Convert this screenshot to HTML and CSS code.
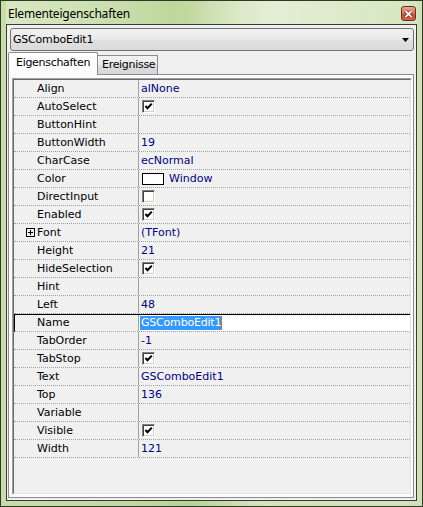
FILE: index.html
```html
<!DOCTYPE html>
<html>
<head>
    <title>Elementeigenschaften</title>
    <link rel="stylesheet" href="styles.css">
</head>
<body>
    <div class="window">
        <div class="titlebar">
            <span class="title">Elementeigenschaften</span>
            <span class="close">
                <svg width="9" height="8" viewBox="0 0 9 8">
                    <path d="M1.5 1 L7.5 7 M7.5 1 L1.5 7" stroke="#5a1a10" stroke-width="3.2"/>
                    <path d="M1.5 1 L7.5 7 M7.5 1 L1.5 7" stroke="#fff" stroke-width="1.8"/>
                </svg>
            </span>
        </div>
        <div class="client">
            <div class="combo">
                <span class="combo-text">GSComboEdit1</span>
                <svg width="7" height="4" viewBox="0 0 7 4"><path d="M0 0 H7 L3.5 4 Z" fill="#000"/></svg>
            </div>
            <div class="tabs">
                <div class="tab active">Eigenschaften</div>
                <div class="tab">Ereignisse</div>
            </div>
            <div class="panel">
                <div class="grid">
                    <div class="rows">
                        <div class="row"><div class="name">Align</div><div class="value">alNone</div></div>
                        <div class="row"><div class="name">AutoSelect</div><div class="value"><span class="check on"></span></div></div>
                        <div class="row"><div class="name">ButtonHint</div><div class="value"></div></div>
                        <div class="row"><div class="name">ButtonWidth</div><div class="value">19</div></div>
                        <div class="row"><div class="name">CharCase</div><div class="value">ecNormal</div></div>
                        <div class="row"><div class="name">Color</div><div class="value"><span class="swatch"></span>Window</div></div>
                        <div class="row"><div class="name">DirectInput</div><div class="value"><span class="check"></span></div></div>
                        <div class="row"><div class="name">Enabled</div><div class="value"><span class="check on"></span></div></div>
                        <div class="row"><div class="name tree"><span class="plus"></span>Font</div><div class="value">(TFont)</div></div>
                        <div class="row"><div class="name">Height</div><div class="value">21</div></div>
                        <div class="row"><div class="name">HideSelection</div><div class="value"><span class="check on"></span></div></div>
                        <div class="row"><div class="name">Hint</div><div class="value"></div></div>
                        <div class="row"><div class="name">Left</div><div class="value">48</div></div>
                        <div class="row sel"><div class="name">Name</div><div class="value"><span class="selected">GSComboEdit1</span></div></div>
                        <div class="row"><div class="name">TabOrder</div><div class="value">-1</div></div>
                        <div class="row"><div class="name">TabStop</div><div class="value"><span class="check on"></span></div></div>
                        <div class="row"><div class="name">Text</div><div class="value">GSComboEdit1</div></div>
                        <div class="row"><div class="name">Top</div><div class="value">136</div></div>
                        <div class="row"><div class="name">Variable</div><div class="value"></div></div>
                        <div class="row"><div class="name">Visible</div><div class="value"><span class="check on"></span></div></div>
                        <div class="row"><div class="name">Width</div><div class="value">121</div></div>
                    </div>
                </div>
            </div>
        </div>
    </div>
</body>
</html>
```

FILE: styles.css
```css
body {
    margin: 0;
    font-family: "DejaVu Sans", Verdana, sans-serif;
    font-size: 11px;
}

.window {
    box-sizing: border-box;
    width: 423px;
    height: 507px;
    display: flex;
    flex-direction: column;
    border: 1px solid #2f3a26;
    padding: 0 5px 5px 5px;
    background: linear-gradient(to right, #c8dda9 0%, #c0d89e 35%, #b8d292 45%, #d5e6bf 62%, #d0e3b8 100%);
}

.titlebar {
    box-sizing: border-box;
    height: 23px;
    padding: 2px 1px 0 2px;
    display: flex;
    align-items: center;
    justify-content: space-between;
    background: linear-gradient(to right, rgba(222, 236, 205, 0.7), rgba(200, 222, 170, 0.2) 40%, rgba(230, 241, 217, 0.8) 65%, rgba(216, 233, 196, 0.6));
}

.title {
    font-family: "Noto Sans", "Open Sans", sans-serif;
    font-size: 12px;
    color: #000;
    letter-spacing: -0.2px;
}

.close {
    box-sizing: border-box;
    width: 15px;
    height: 15px;
    display: flex;
    align-items: center;
    justify-content: center;
    border: 1px solid #6e2c22;
    border-radius: 3px;
    background: linear-gradient(#eaa696, #d9735c 50%, #c8452b 51%, #d7644a);
}

.client {
    flex: 1;
    display: flex;
    flex-direction: column;
    border: 1px solid #3a3a3a;
    background: #f0f0f0;
}

.combo {
    box-sizing: border-box;
    height: 23px;
    margin: 3px 2px 0 3px;
    padding: 0 4px 0 2px;
    display: flex;
    align-items: center;
    justify-content: space-between;
    border: 1px solid #707070;
    border-radius: 3px;
    background: linear-gradient(#f2f2f2, #e9e9e9 50%, #e0e0e0 51%, #dadada);
}

.combo-text {
    color: #000;
    letter-spacing: -0.2px;
}

.tabs {
    display: flex;
    align-items: flex-end;
    height: 22px;
    margin: 1px 0 0 1px;
}

.tab {
    box-sizing: border-box;
    border: 1px solid #898c95;
    border-bottom: none;
    line-height: 18px;
    color: #000;
    letter-spacing: -0.3px;
    white-space: nowrap;
}

.tab.active {
    position: relative;
    z-index: 1;
    width: 90px;
    height: 23px;
    margin-bottom: -1px;
    padding: 1px 0 0 7px;
    border-radius: 2px 2px 0 0;
    background: linear-gradient(#ffffff, #fbfbfb);
}

.tab:not(.active) {
    width: 60px;
    height: 19px;
    padding-left: 4px;
    border-left: none;
    background: linear-gradient(#f2f2f2, #ebebeb 50%, #dedede 51%, #d6d6d6);
}

.panel {
    flex: 1;
    display: flex;
    flex-direction: column;
    margin: 0 2px 2px 1px;
    padding: 3px 1px 2px 3px;
    border: 1px solid #898c95;
    background: #fbfbfb;
}

.grid {
    flex: 1;
    display: flex;
    border: 1px solid;
    border-color: #a0a0a0 #ffffff #ffffff #a0a0a0;
}

.rows {
    flex: 1;
    border: 1px solid;
    border-color: #696969 #e3e3e3 #e3e3e3 #696969;
    background: #f0f0f0;
}

.row {
    box-sizing: border-box;
    height: 18px;
    display: grid;
    grid-template-columns: 125px 1fr;
    border-bottom: 1px dotted #a0a0a0;
    line-height: 17px;
}

.name {
    box-sizing: border-box;
    padding-left: 23px;
    border-right: 1px solid #a0a0a0;
    color: #000;
    white-space: nowrap;
}

.name.tree {
    display: flex;
    align-items: center;
    padding-left: 12px;
}

.plus {
    box-sizing: border-box;
    width: 9px;
    height: 9px;
    margin-right: 2px;
    border: 1px solid #000;
    background:
        linear-gradient(#000, #000) center / 5px 1px no-repeat,
        linear-gradient(#000, #000) center / 1px 5px no-repeat;
}

.value {
    display: flex;
    align-items: center;
    padding-left: 2px;
    color: #000080;
    white-space: nowrap;
    overflow: hidden;
}

.check {
    box-sizing: border-box;
    width: 13px;
    height: 13px;
    margin-left: 1px;
    border: 1px solid;
    border-color: #808080 #ffffff #ffffff #808080;
    box-shadow: inset 1px 1px 0 #404040, inset -1px -1px 0 #d4d0c8;
    background: #fff;
}

.check.on {
    background: #fff url("data:image/svg+xml,%3Csvg xmlns='http://www.w3.org/2000/svg' width='11' height='11'%3E%3Cpath d='M2.5 5 L4.5 7.2 L8.8 2.6' fill='none' stroke='%23000' stroke-width='2.1'/%3E%3C/svg%3E") no-repeat 0 0;
}

.swatch {
    box-sizing: border-box;
    width: 22px;
    height: 12px;
    margin: 0 5px 0 1px;
    border: 1px solid #000;
    background: #fff;
}

.row.sel {
    border-top: 1px solid #000;
    border-left: 1px solid #000;
    grid-template-columns: 124px 1fr;
    line-height: 16px;
}

.row.sel .name {
    padding-left: 22px;
}

.row.sel .value {
    align-items: flex-start;
    padding-left: 1px;
    background: #fff;
}

.selected {
    margin-top: 1px;
    padding-left: 1px;
    line-height: 14px;
    background: #3399ff;
    color: #fff;
    border-right: 1px solid #d2691e;
    letter-spacing: -0.2px;
}
```
